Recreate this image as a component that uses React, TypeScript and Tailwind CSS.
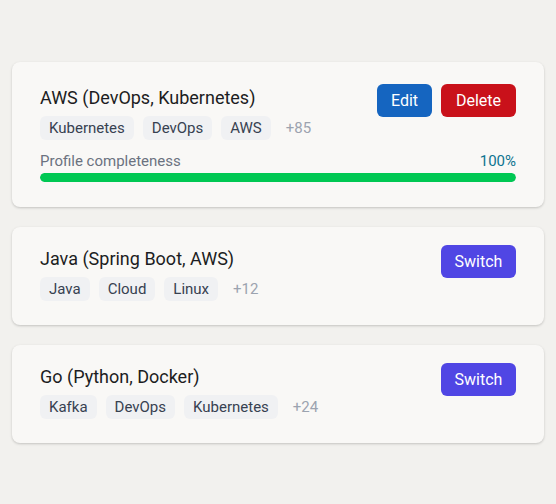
const profiles = [
  {
    title: "AWS (DevOps, Kubernetes)",
    tags: ["Kubernetes", "DevOps", "AWS"],
    more: 85,
    active: true,
    completeness: 100,
  },
  {
    title: "Java (Spring Boot, AWS)",
    tags: ["Java", "Cloud", "Linux"],
    more: 12,
    active: false,
    completeness: 0,
  },
  {
    title: "Go (Python, Docker)",
    tags: ["Kafka", "DevOps", "Kubernetes"],
    more: 24,
    active: false,
    completeness: 0,
  },
];

const Tag = ({ label }: { label: string }) => (
  <span className="rounded-md bg-[#f0f1f3] px-[9px] h-[24px] flex items-center text-[15px] text-[#374151]">
    {label}
  </span>
);

export default function App() {
  return (
    <div
      className="min-h-[504px] bg-[#f2f1ee] px-3 pt-[62px] pb-10 flex flex-col gap-5"
      style={{ fontFamily: 'Roboto, "Noto Sans", sans-serif' }}
    >
      {profiles.map((p) => (
        <div
          key={p.title}
          className={`rounded-lg bg-[#f9f8f6] px-7 shadow-[0_1px_3px_rgba(0,0,0,0.14),0_1px_2px_rgba(0,0,0,0.06)] ${
            p.active ? "pt-[22px] pb-[25px]" : "pt-[18px] pb-6"
          }`}
        >
          <div className="flex items-start justify-between">
            <div className="flex flex-col">
              <h3 className="text-[18px] leading-[28px] text-[#1c1d22] font-normal">{p.title}</h3>
              <div className="mt-1 flex items-center gap-[9px]">
                {p.tags.map((t) => (
                  <Tag key={t} label={t} />
                ))}
                <span className="ml-[6px] text-[15px] text-[#9ca3af]">+{p.more}</span>
              </div>
            </div>
            {p.active ? (
              <div className="flex gap-[9px]">
                <button className="h-[33px] w-[55px] rounded-md bg-[#1565c0] text-[16px] text-white">Edit</button>
                <button className="h-[33px] w-[75px] rounded-md bg-[#c9111a] text-[16px] text-white">Delete</button>
              </div>
            ) : (
              <button className="h-[33px] w-[75px] rounded-md bg-[#5046e4] text-[16px] text-white">Switch</button>
            )}
          </div>
          {p.active && (
            <div className="mt-[10px]">
              <div className="flex justify-between text-[15px] leading-[22px]">
                <span className="text-[#6b7280]">Profile completeness</span>
                <span className="text-[#0e7490]">{p.completeness}%</span>
              </div>
              <div className="mt-[1px] h-[9px] w-full rounded-full bg-[#e5e7eb] overflow-hidden">
                <div className="h-full rounded-full bg-[#00c853]" style={{ width: `${p.completeness}%` }} />
              </div>
            </div>
          )}
        </div>
      ))}
    </div>
  );
}
